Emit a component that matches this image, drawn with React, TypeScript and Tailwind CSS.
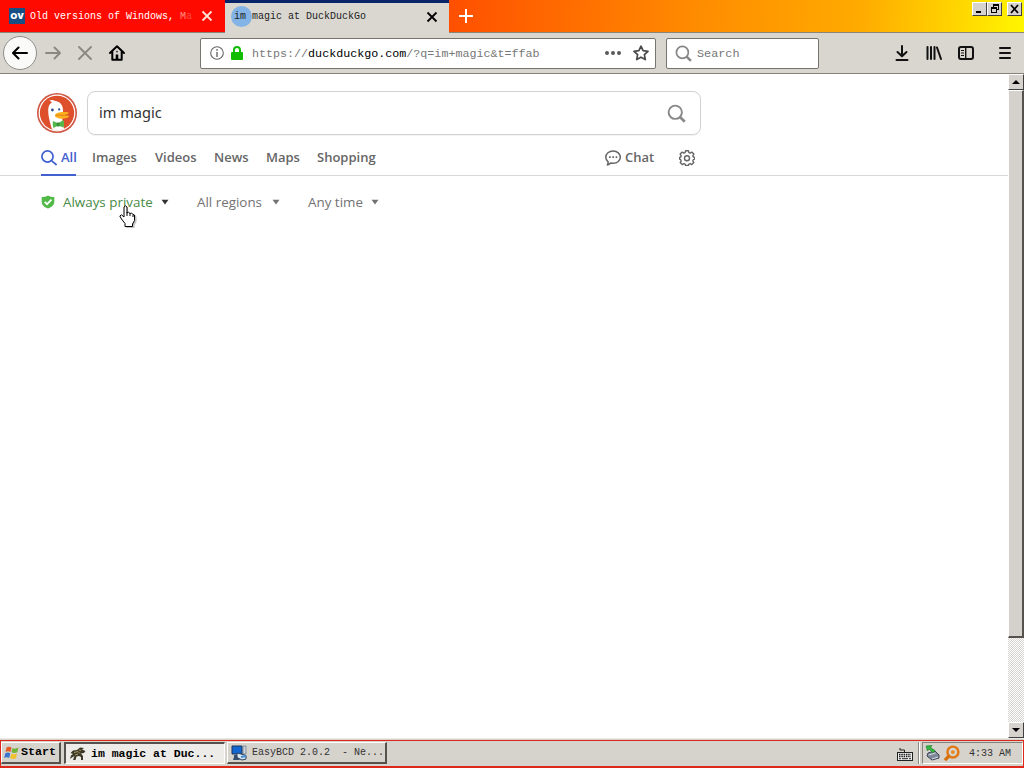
import React from 'react';
import clsx from 'clsx';

const TABS = [
  { label: 'Images', className: 'w-[63px]' },
  { label: 'Videos', className: 'w-[59px]' },
  { label: 'News', className: 'w-[52px]' },
  { label: 'Maps', className: 'w-[51px]' },
  { label: 'Shopping', className: 'w-[75px]' },
];

function CloseX({ className }: { className?: string }) {
  return (
    <svg viewBox="0 0 12 12" className={clsx('h-3 w-3 shrink-0', className)} fill="none" stroke="currentColor" strokeWidth="1.8">
      <path d="M1.5 1.5l9 9M10.5 1.5l-9 9" />
    </svg>
  );
}

function SearchIcon({ className }: { className?: string }) {
  return (
    <svg viewBox="0 0 20 20" className={className} fill="none" stroke="currentColor" strokeWidth="2">
      <circle cx="8.7" cy="8.7" r="7" />
      <path d="M13.7 13.7l5 5" strokeWidth="2.8" />
    </svg>
  );
}

function WindowButton({ children }: { children: React.ReactNode }) {
  return (
    <div className="h-[14px] w-[15px] border border-t-white border-l-white border-r-[#404040] border-b-[#404040] bg-[#d6d3ce]">
      <svg viewBox="0 0 13 12" className="h-3 w-[13px]" fill="#000">
        {children}
      </svg>
    </div>
  );
}

function TabStrip() {
  return (
    <div className="flex h-[33px] border-b border-[#8b8375] bg-[linear-gradient(93deg,#ff0000_0%,#ff1400_22%,#ff5200_45%,#ff8c00_68%,#ffab00_84%,#ffd800_94%,#fff600_100%)]">
      <div className="flex h-8 w-[225px] items-center bg-[#ff0a00] pl-[9px] text-white">
        <div className="flex h-4 w-4 shrink-0 items-center justify-center bg-[#174f85] font-['Open_Sans',sans-serif] text-[9px] font-extrabold">
          OV
        </div>
        <div className="ml-[5px] w-[167px] overflow-hidden pt-px font-['Liberation_Mono',monospace] text-[10px] whitespace-pre">
          Old versions of Windows, <span className="text-[#ff8d80]">M</span><span className="text-[#ff4d40]">a</span>
        </div>
        <CloseX className="ml-1 text-[#ffe4d8]" />
      </div>
      <div className="flex h-[33px] w-[224px] items-center border-t-[3px] border-[#0a246a] bg-[#dad7d1] pr-[11px] pb-[3px] pl-[6px]">
        <div className="h-[21px] w-[21px] shrink-0 rounded-full bg-[#84b3e6]" />
        <div className="-ml-[18px] grow font-['Liberation_Mono',monospace] text-[10px] whitespace-pre text-[#222]">
          im magic at DuckDuckGo
        </div>
        <CloseX className="text-black" />
      </div>
      <svg viewBox="0 0 14 14" className="mt-[9px] ml-[10px] h-[14px] w-[14px]" stroke="#fff" strokeWidth="2">
        <path d="M7 0v14M0 7h14" />
      </svg>
      <div className="mt-[2px] mr-[2px] ml-auto flex">
        <WindowButton>
          <path d="M3 8h5v2H3z" />
        </WindowButton>
        <WindowButton>
          <path d="M5 1h6v6H9V6h1V3H6v1H5zM3 4h6v6H3zM4 6v3h4V6z" fillRule="evenodd" />
        </WindowButton>
        <div className="w-[5px]" />
        <WindowButton>
          <path d="M3 2l7 8M10 2L3 10" stroke="#000" strokeWidth="1.8" />
        </WindowButton>
      </div>
    </div>
  );
}

function NavBar() {
  return (
    <div className="flex h-[41px] items-center border-b border-[#858178] bg-[#d9d6d0]">
      <div className="ml-[3px] flex h-[34px] w-[34px] items-center justify-center rounded-full border border-[#908e89] bg-[#fafaf9]">
        <svg viewBox="0 0 16 16" className="h-4 w-4" fill="none" stroke="#000" strokeWidth="2" strokeLinecap="round" strokeLinejoin="round">
          <path d="M15 8H1.5M6.500 2.500L1 8l5.500 5.500" />
        </svg>
      </div>
      <svg viewBox="0 0 16 16" className="ml-2 h-4 w-4" fill="none" stroke="#8b8884" strokeWidth="1.9" strokeLinecap="round" strokeLinejoin="round">
        <path d="M1 8h13.500M9.500 2.500L15 8l-5.500 5.500" />
      </svg>
      <svg viewBox="0 0 16 16" className="ml-4 h-4 w-4" fill="none" stroke="#8b8884" strokeWidth="1.9" strokeLinecap="round">
        <path d="M2 2l12 12M14 2L2 14" />
      </svg>
      <svg viewBox="0 0 16 16" className="ml-4 h-4 w-4" fill="none" stroke="#000" strokeWidth="2" strokeLinecap="round" strokeLinejoin="round">
        <path d="M1 8l7-6.700L15 8M3.300 7v7.700h9.400V7" />
        <path d="M8 14.500V9.500" strokeWidth="2.6" strokeLinecap="butt" />
        <path d="M8 6.500v.3" strokeWidth="1.5" />
      </svg>

      <div className="ml-[75px] flex h-[31px] w-[456px] items-center rounded-[2px] border border-[#77746f] bg-white pr-[6px] pl-[9px]">
        <svg viewBox="0 0 14 14" className="h-[14px] w-[14px] shrink-0" fill="none" stroke="#666">
          <circle cx="7" cy="7" r="6.3" strokeWidth="1.1" />
          <path d="M7 6v5M7 3v1.700" strokeWidth="1.4" />
        </svg>
        <svg viewBox="0 0 12 14" className="ml-[7px] h-[14px] w-3 shrink-0">
          <path d="M3 7V4a3 3 0 0 1 6 0v3" fill="none" stroke="#12bc00" strokeWidth="2" />
          <rect x="0" y="6" width="12" height="8" rx="1" fill="#12bc00" />
        </svg>
        <div className="ml-[9px] grow pt-[3px] font-['Liberation_Mono',monospace] text-[11.7px] whitespace-pre text-[#777]">
          https://<span className="text-black">duckduckgo.com</span>/?q=im+magic&amp;t=ffab
        </div>
        <svg viewBox="0 0 16 4" className="mr-3 h-1 w-4" fill="#595959">
          <circle cx="2" cy="2" r="2" />
          <circle cx="8" cy="2" r="2" />
          <circle cx="14" cy="2" r="2" />
        </svg>
        <svg viewBox="0 0 16 16" className="h-4 w-4 shrink-0" fill="none" stroke="#494949" strokeWidth="1.7" strokeLinejoin="round">
          <path d="M8 1.200l2.100 4.500 4.900.600-3.600 3.400.900 4.900L8 12.200l-4.300 2.400.9-4.900L1 6.300l4.900-.6z" />
        </svg>
      </div>

      <div className="ml-[10px] flex h-[31px] w-[153px] items-center rounded-[2px] border border-[#77746f] bg-white pl-2">
        <SearchIcon className="h-[17px] w-[17px] text-[#858585]" />
        <span className="ml-[5px] pt-[3px] font-['Liberation_Mono',monospace] text-[11.8px] text-[#757575]">Search</span>
      </div>

      <div className="ml-auto flex items-center gap-4 pr-[11px]">
        <svg viewBox="0 0 16 16" className="h-4 w-4" fill="none" stroke="#111" strokeWidth="2" strokeLinecap="round" strokeLinejoin="round">
          <path d="M8 1v10M3.500 7L8 11.300 12.500 7M2.500 15h11" />
        </svg>
        <svg viewBox="0 0 16 16" className="h-4 w-4" fill="none" stroke="#111" strokeWidth="2" strokeLinecap="round">
          <path d="M1.500 2v12M5 2v12M8.500 2v12M11 2.500l4 11.500" />
        </svg>
        <svg viewBox="0 0 16 16" className="h-4 w-4" fill="none" stroke="#111">
          <rect x="1" y="2" width="14" height="12" rx="2" strokeWidth="2" />
          <path d="M7.700 2v12" strokeWidth="1.4" />
          <path d="M3 5.500h3M3 8h3M3 10.500h3" />
        </svg>
        <svg viewBox="0 0 16 16" className="ml-[7px] h-4 w-4" fill="none" stroke="#111" strokeWidth="2" strokeLinecap="round">
          <path d="M3 3h10M3 8h10M3 13h10" />
        </svg>
      </div>
    </div>
  );
}

function DuckLogo() {
  return (
    <svg viewBox="0 0 40 40" className="h-10 w-10 shrink-0">
      <circle cx="20" cy="20" r="20" fill="#cf5743" />
      <circle cx="20" cy="20" r="18.4" fill="#fff" />
      <circle cx="20" cy="20" r="17.2" fill="#de4f2c" />
      <path d="M15 36.500C13 29 11 23 11.200 17c.1-4 1.600-6.600 3.800-7.800-.8-.9-1.800-1.300-2.800-1.500 2-1.200 4.400-.8 5.800.3 5.300.5 8 4.200 8 9.500 0 4-.5 6.500-.7 9L27 36C23 37.700 18.500 37.500 15 36.500z" fill="#fff" />
      <circle cx="15.4" cy="17" r="1.4" fill="#2d4f8e" />
      <circle cx="22.2" cy="16.4" r="1.1" fill="#2d4f8e" />
      <path d="M18 22.300c.5-2.600 4.500-3.200 8-3.300 2.500-.1 5.500-.3 5.700.8.2 1.500-3 2-5 2.400 2.500.4 5.500-.2 5.300 1.100-.3 1.800-5.800 2.800-9.300 2.200-3-.5-5-1.400-4.700-3.200z" fill="#fbb01c" />
      <path d="M18.500 22.600c3-1.200 5.500 0 9-.3" stroke="#e0801c" fill="none" />
      <path d="M16 28l5 2.200L26.500 27c.8 2.500.8 5.500 0 7.500L21 32.500 16.500 35c-.8-2.500-1-4.700-.5-7z" fill="#56b84a" />
      <rect x="19.5" y="29.5" width="3.2" height="4" rx="1" fill="#35933b" />
    </svg>
  );
}

function Filter({ label, className, textClass }: { label: string; className: string; textClass?: string }) {
  return (
    <div className={clsx('flex items-center justify-between', className)}>
      <span className={clsx('whitespace-nowrap', textClass)}>{label}</span>
      <svg viewBox="0 0 8 6" className="h-[6px] w-2" fill="currentColor">
        <path d="M.5.7h7L4 5.400z" />
      </svg>
    </div>
  );
}

function SearchPage() {
  return (
    <div className="relative grow bg-white font-['Open_Sans',sans-serif]">
      <div className="h-[102px] border-b border-[#d8d8d8] pl-[37px]">
        <div className="flex items-center pt-[17px]">
          <DuckLogo />
          <div className="ml-[10px] flex h-11 w-[614px] items-center justify-between rounded-lg border border-[#d2d2d2] pr-[14px] pl-[11px] shadow-[0_1px_1px_rgba(0,0,0,0.05)]">
            <span className="pb-px font-['Noto_Sans',sans-serif] text-[14.6px] text-[#333]">im magic</span>
            <SearchIcon className="h-[19px] w-[19px] text-[#888]" />
          </div>
        </div>
        <div className="flex h-[41px] w-[664px] items-stretch pl-[4px] text-[13px] font-semibold text-[#666]">
          <div className="mr-4 flex w-[35px] items-center border-b-2 border-[#4161d0] pt-[6px] text-[#4161d0]">
            <svg viewBox="0 0 16 16" className="mr-1 h-4 w-4 shrink-0" fill="none" stroke="currentColor" strokeWidth="1.7" strokeLinecap="round">
              <circle cx="6.5" cy="6.5" r="5.6" />
              <path d="M10.800 10.800l4.300 3.700" />
            </svg>
            <span>All</span>
          </div>
          {TABS.map(({ label, className }) => (
            <div key={label} className={clsx('flex shrink-0 items-center pt-1', className)}>
              {label}
            </div>
          ))}
          <div className="ml-auto flex items-center pt-1 pr-[6px]">
            <svg viewBox="0 0 16 16" className="mr-1 h-4 w-4" fill="none" stroke="#666" strokeWidth="1.5" strokeLinejoin="round">
              <path d="M8.200 1C4 1 .8 3.600.8 7.200c0 2 .9 3.500 2.400 4.600L2.500 15l3.500-2c.7.200 1.400.2 2.200.2 4.100 0 7.100-2.600 7.100-6S12.300 1 8.200 1z" />
              <path d="M4 7.200h1.700M7.300 7.200H9M10.600 7.200h1.700" strokeWidth="1.7" />
            </svg>
            <span className="w-[31px]">Chat</span>
            <svg viewBox="0 0 16 16" className="ml-[23px] h-4 w-4" fill="none" stroke="#666" strokeWidth="1.4" strokeLinejoin="round">
              <path d="M6.600.8h2.800l.5 1.800 1.200.5 1.700-1 2 2-1 1.700.5 1.200 1.500.4v1.800l-1.500.5-.5 1.200 1 1.700-2 2-1.700-1-1.200.5-.5 1.300H6.600l-.5-1.300-1.200-.5-1.700 1-2-2 1-1.700-.5-1.200L.6 9.200V7.400L1.700 7l.5-1.200-1-1.700 2-2 1.700 1 1.200-.5z" />
              <circle cx="8" cy="8.2" r="2.5" />
            </svg>
          </div>
        </div>
      </div>
      <div className="flex h-[52px] items-center pl-[41px] text-[13.4px] text-[#727272]">
        <svg viewBox="0 0 14 14" className="mr-2 h-[14px] w-[14px]">
          <path d="M7 .500c2 1.300 3.900 1.500 6.300 1.500v4.500c0 3.500-2.600 5.700-6.300 7-3.700-1.300-6.300-3.500-6.300-7V2C3.100 2 5 1.800 7 .500z" fill="#50b947" />
          <path d="M3.700 6.800L6 9.200l4.500-4.500" fill="none" stroke="#fff" strokeWidth="1.8" />
        </svg>
        <Filter label="Always private" className="w-[106px] text-[#333]" textClass="text-[#4a8a45]" />
        <Filter label="All regions" className="ml-[28px] w-[83px]" />
        <Filter label="Any time" className="ml-[28px] w-[71px]" />
      </div>
      <svg viewBox="0 0 18 23" className="absolute top-[131px] left-[119px] h-[23px] w-[18px]" strokeLinejoin="round">
        <path d="M6.500 23L5.500 19 2 14.500.8 11.500l2-1L5 12.500V2l1.500-1L8 2v6l1.700-1 1.500 1.300 1.600-.3 1.200 1.500L16 10l.6 2v4l-2 4v2.500z" fill="#999" opacity=".6" transform="translate(1 .5)" />
        <path d="M6 21.500v-3L2.500 14 .8 11l1.700-1.200L5 12V2L6.500.8 8 2v6l1.500-.8L11 8.500l1.500-.5L14 9.500l1.500.5v5.500L13.500 19v2.500z" fill="#fff" stroke="#000" />
        <path d="M8 7v4M11 8.500V11M14 9.500V12" stroke="#000" />
      </svg>
    </div>
  );
}

function ScrollButton({ down }: { down?: boolean }) {
  return (
    <div className="flex h-4 w-4 shrink-0 items-center justify-center border border-t-white border-l-white border-r-[#404040] border-b-[#404040] bg-[#d6d3ce]">
      <svg viewBox="0 0 8 4" className="h-1 w-2">
        <path d={down ? 'M0 0h8L4 4z' : 'M0 4h8L4 0z'} fill="#000" />
      </svg>
    </div>
  );
}

function ScrollBar() {
  return (
    <div className="flex w-4 shrink-0 flex-col bg-[#f3f2f0] bg-[repeating-conic-gradient(#d6d3ce_0_25%,#ffffff_0_50%)] bg-[length:2px_2px]">
      <ScrollButton />
      <div className="h-[548px] border-t border-r-2 border-b-2 border-l border-t-white border-r-[#55524e] border-b-[#55524e] border-l-white bg-[#d4d0cb]" />
      <div className="grow" />
      <ScrollButton down />
    </div>
  );
}

function TaskBar() {
  return (
    <div className="flex h-7 items-start border border-b-2 border-[#df281c] bg-[#d6d2cc] pt-px font-['Liberation_Mono',monospace] text-[10px] text-black">
      <div className="flex h-[22px] w-[60px] items-center border border-t-white border-r-2 border-b-2 border-l-white border-r-[#55524e] border-b-[#55524e] pl-[2px] text-[11.7px] font-bold">
        <svg viewBox="0 0 16 16" className="mr-px h-4 w-4 shrink-0">
          <path d="M2.500 2.500Q5 1 7.500 2.500L6.500 7Q4 5.500 1.500 7z" fill="#e45b28" />
          <path d="M8.500 3Q11 4.500 14.500 2.500L13.300 7.300Q10 8.700 7.500 7.300z" fill="#71b238" />
          <path d="M1.300 8.200Q4 6.800 6.300 8.300L5.200 13Q2.500 11.700.1 13z" fill="#3a75cf" />
          <path d="M7.300 8.700Q10 10 13 8.500L12 13.200Q9 14.700 6.200 13.200z" fill="#efc22b" />
        </svg>
        Start
      </div>
      <div className="ml-[3px] flex h-[22px] w-[161px] items-center border border-t-2 border-l-2 border-t-[#55524e] border-r-white border-b-white border-l-[#55524e] bg-[#eeece9] pl-1 text-[11.5px] font-bold whitespace-pre">
        <svg viewBox="0 0 16 16" className="mr-[5px] h-4 w-4 shrink-0">
          <path d="M.5 7L3 4.500 7 4l3-2.500 4 .5L12 3.500l3.500 1.500-1.500 2-3 .5 2 2.500v4h-2v-3l-2-1-2.500.5L5.500 14H3l1.500-4L2 11.500 0 13l1-3.500L3 8z" fill="#3c3a27" />
          <path d="M4 6.500l4-1 2 2M9 4l2 .500M5 9l3-1" stroke="#ae9a67" fill="none" />
        </svg>
        im magic at Duc...
      </div>
      <div className="ml-[2px] flex h-[22px] w-[160px] items-center border border-t-white border-r-2 border-b-2 border-l-white border-r-[#55524e] border-b-[#55524e] pl-[3px] whitespace-pre text-[#333]">
        <svg viewBox="0 0 17 16" className="mr-[4px] h-4 w-[17px] shrink-0">
          <path d="M1 1h10v8H1z" fill="#1266d1" stroke="#18345b" />
          <path d="M12 1h3v8h-3z" fill="#c9d3de" stroke="#5b6876" strokeWidth=".6" />
          <path d="M3 10h6l2 2-3 3H2l1-3z" fill="#364f70" />
          <path d="M6 8l4 1 5 1.500V14l-4 1-5-2.500z" fill="#dbe6f1" stroke="#29415f" />
          <path d="M10 12l5-1" stroke="#438bd0" strokeWidth="2" />
        </svg>
        EasyBCD 2.0.2  - Ne...
      </div>
      <svg viewBox="0 0 16 14" className="mt-[5px] ml-auto h-[14px] w-4" fill="none" stroke="#222">
        <path d="M7.500 5V3H3V1" />
        <rect x=".5" y="5.5" width="15" height="8" fill="#eee" />
        <path d="M2 7.500h12M2 9.500h12" strokeWidth="1.3" strokeDasharray="1.5 .8" />
        <path d="M2 11.700h2M5 11.700h6M12 11.700h2" />
      </svg>
      <div className="ml-[5px] h-[22px] border-r border-l border-r-white border-l-[#8b8880]" />
      <div className="ml-[2px] flex h-[22px] w-[101px] items-center border border-t-[#85827c] border-r-white border-b-white border-l-[#85827c] pl-[2px] text-[#333]">
        <svg viewBox="0 0 16 16" className="h-4 w-4 shrink-0">
          <path d="M3 8l7-2 4 4v3l-7 2-5-4z" fill="#7e8799" stroke="#3c4656" />
          <path d="M3.500 10l7-2M7 14l6-2" stroke="#d8dfe8" />
          <path d="M1 1l6-.5-1.500 2L10 5.500 8 8 4 4 2.500 6z" fill="#35b63f" stroke="#167a27" strokeWidth=".6" />
        </svg>
        <svg viewBox="0 0 18 18" className="ml-[2px] h-[17px] w-[17px] shrink-0" fill="none">
          <circle cx="10.5" cy="7.5" r="5.8" stroke="#e17812" strokeWidth="2.6" />
          <path d="M6.500 11.500L2 16" stroke="#d77008" strokeWidth="3.5" />
          <circle cx="10.5" cy="7.5" r="2" fill="#e88a20" />
        </svg>
        <span className="ml-[9px] whitespace-pre">4:33 AM</span>
      </div>
    </div>
  );
}

export default function App() {
  return (
    <div className="flex h-[768px] w-[1024px] flex-col overflow-hidden bg-white">
      <TabStrip />
      <NavBar />
      <div className="flex h-[664px]">
        <SearchPage />
        <ScrollBar />
      </div>
      <div className="h-[2px] border-b border-[#d6d2cc] bg-[#eceae6]" />
      <TaskBar />
    </div>
  );
}
